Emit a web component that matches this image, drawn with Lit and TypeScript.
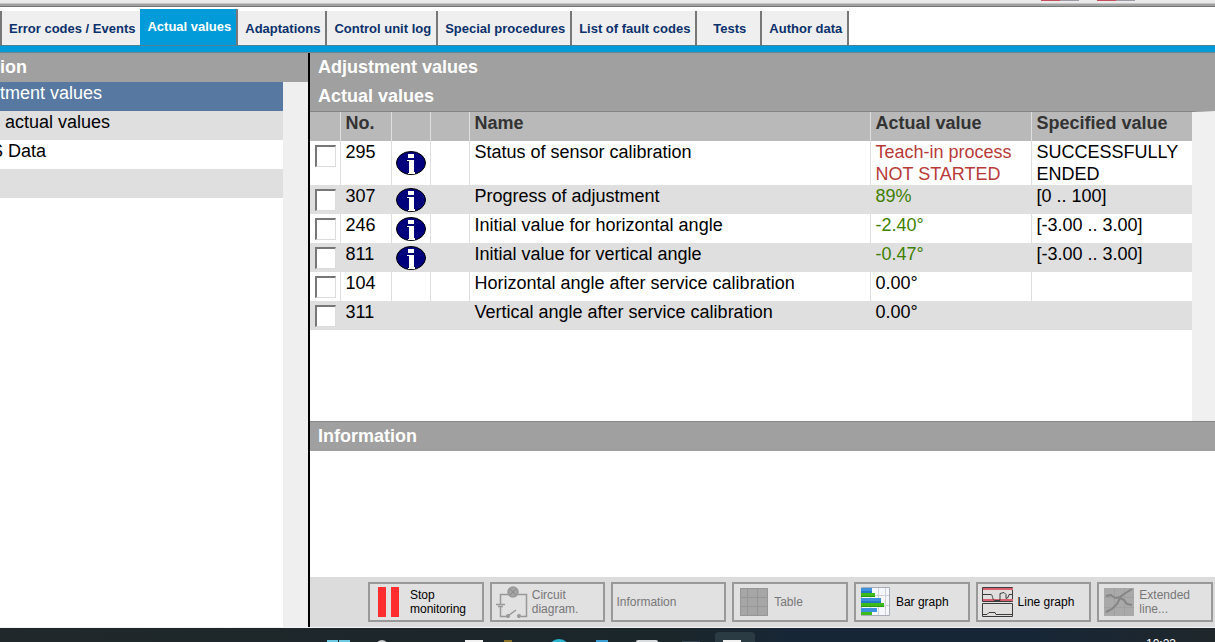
import { LitElement, html, css, svg, nothing } from "lit";
import { customElement, state } from "lit/decorators.js";
import { classMap } from "lit/directives/class-map.js";

interface Row {
  no: string;
  info: boolean;
  name: string;
  actual: string[];
  tone: string;
  spec: string[];
}

const ROWS: Row[] = [
  { no: "295", info: true, name: "Status of sensor calibration", actual: ["Teach-in process", "NOT STARTED"], tone: "bad", spec: ["SUCCESSFULLY", "ENDED"] },
  { no: "307", info: true, name: "Progress of adjustment", actual: ["89%"], tone: "good", spec: ["[0 .. 100]"] },
  { no: "246", info: true, name: "Initial value for horizontal angle", actual: ["-2.40°"], tone: "good", spec: ["[-3.00 .. 3.00]"] },
  { no: "811", info: true, name: "Initial value for vertical angle", actual: ["-0.47°"], tone: "good", spec: ["[-3.00 .. 3.00]"] },
  { no: "104", info: false, name: "Horizontal angle after service calibration", actual: ["0.00°"], tone: "", spec: [] },
  { no: "311", info: false, name: "Vertical angle after service calibration", actual: ["0.00°"], tone: "", spec: [] },
];

const TABS = ["Error codes / Events", "Actual values", "Adaptations", "Control unit log", "Special procedures", "List of fault codes", "Tests", "Author data"];

const pauseIcon = html`<svg width="32" height="32" viewBox="0 0 32 32">
  <path fill="#ff2d30" d="M4 1h8v30H4zM17 1h8v30h-8z" />
</svg>`;

const circuitIcon = html`<svg width="32" height="32" viewBox="0 0 32 32" fill="none" stroke="#999" stroke-width="1.5">
  <path d="M14 8.500H4.500V18M20 8.500H30.500V30.500H25M0 18.500H9M2 20.500H7M4.500 20.500V30.500H11" />
  <path d="M12 30L20 24" />
  <circle cx="17" cy="6" r="5" fill="#a3a3a3" />
  <path stroke-width="1" d="M14 3l6 6M20 3l-6 6" stroke="#8b8b8b" />
  <circle cx="12" cy="30" r="1.300" fill="#999" /><circle cx="23" cy="30" r="1.300" fill="#999" />
</svg>`;

const tableIcon = html`<svg width="32" height="32" viewBox="0 0 32 32">
  <path fill="#a6a6a6" d="M2 2h28v28H2z" />
  <path fill="none" stroke="#969696" d="M2.500 2.500h27v27h-27zM9.500 2v28M19.500 2v28M2 11.500h28M2 20.500h28" />
</svg>`;

const barIcon = html`<svg width="32" height="32" viewBox="0 0 32 32">
  <path fill="#f6f7fb" stroke="#a9adba" d="M1.500 1.500h28v28h-28z" />
  <path fill="none" stroke="#cdd0da" d="M10.500 2v27M18.500 2v27M25.500 2v27M2 9.500h27M2 19.500h27" />
  <path fill="#3b91dd" d="M1 2h11v5H1zM1 12h20v5H1zM1 22h16v4H1z" />
  <path fill="#2377c4" d="M1 5h11v2H1zM1 15h20v2H1z" />
  <path fill="#3dbb1c" d="M1 7h14v4H1zM1 17h23v4H1zM1 26h11v3H1z" />
  <path fill="#269912" d="M1 10h14v1H1zM1 20h23v1H1z" />
</svg>`;

const lineIcon = html`<svg width="32" height="32" viewBox="0 0 32 32" fill="none" stroke="#3c3c3c">
  <path fill="#e1dede" d="M.5 1.500h30v14H.5zM.5 17.500h30v13H.5z" />
  <path stroke="#d8606a" stroke-width="2" d="M1 3h30M1 14h30" />
  <path d="M1 8.500h8c2 0 1 6 4 6h5V7.500l4-1 2 2v4l2-1 1-3h4" />
  <path d="M1 28.500h4l2-2h6l1 2h17" />
</svg>`;

const extendedIcon = html`<svg width="32" height="32" viewBox="0 0 32 32" fill="none">
  <path fill="#a9a9a9" d="M1 2h30v28H1z" />
  <path stroke="#a0a0a0" d="M11.500 2v28M21.500 2v28M1 11.500h30M1 21.500h30" />
  <path stroke="#858585" stroke-width="2" d="M3 10l5-1 4 3 5-1 4-3 8-5M3 26l6-3 5-5 3-6 4 2 3 4 5 1" />
</svg>`;

const TOOLS = [
  { icon: pauseIcon, lines: ["Stop", "monitoring"], off: false },
  { icon: circuitIcon, lines: ["Circuit", "diagram."], off: true },
  { icon: null, lines: ["Information"], off: true },
  { icon: tableIcon, lines: ["Table"], off: true },
  { icon: barIcon, lines: ["Bar graph"], off: false },
  { icon: lineIcon, lines: ["Line graph"], off: false },
  { icon: extendedIcon, lines: ["Extended", "line..."], off: true },
];

const lines = (parts: string[]) => parts.map((p, i) => (i ? html`<br />${p}` : p));

@customElement("app-root")
export class AppRoot extends LitElement {
  @state() private tab = 1;

  static styles = css`
    :host {
      display: flex;
      flex-direction: column;
      height: 100vh;
      overflow: hidden;
      background: #fff;
      color: #000;
      font: 18px/22px "Liberation Sans", Arial, sans-serif;
    }
    * { box-sizing: border-box; }
    button { font: inherit; margin: 0; cursor: pointer; }
    button:disabled { cursor: default; }
    svg { display: block; flex: none; }
    h2 {
      margin: 0;
      padding-left: 8px;
      font-size: 18px;
      line-height: 29px;
      color: #fff;
      background: #a0a0a0;
    }
    .top {
      display: flex;
      justify-content: flex-end;
      gap: 18px;
      flex: none;
      height: 7px;
      padding-right: 80px;
      background: linear-gradient(#e9e9e9 0 3px, #c4c4c4 3px 4px, #a0a0a0 4px 6px, #777 6px);
    }
    .mark { width: 38px; height: 1px; background: linear-gradient(90deg, #c4505c 50%, #a09aa5 50%); }
    .tabs {
      display: flex;
      align-items: flex-end;
      flex: none;
      height: 38px;
      padding-left: 2px;
      background: linear-gradient(#fff 4px, #777 4px) left / 2px no-repeat;
    }
    .tab {
      height: 34px;
      padding: 2px 5px 0 7px;
      border: 0;
      border-right: 2px solid #777;
      background: #efefef;
      color: #0b316b;
      font-size: 13px;
      font-weight: bold;
      white-space: nowrap;
    }
    .short { min-width: 65px; }
    .before { border-right: 0; }
    .current { height: 36px; padding-top: 0; background: #009bd8; color: #fff; }
    .rule {
      flex: none;
      height: 8px;
      background: #009bd8;
      border-top: 1px solid #4d7f96;
      border-bottom: 1px solid #6e8690;
    }
    .body { display: flex; flex: 1; min-height: 0; }
    .side {
      display: flex;
      flex-direction: column;
      flex: 0 0 310px;
      border-right: 2px solid #000;
      overflow: hidden;
    }
    .side h2 { padding: 0; }
    .list { flex: 1; margin: 0; padding: 0; list-style: none; border-right: 25px solid #efefef; }
    .item {
      display: block;
      height: 29px;
      color: #000;
      text-decoration: none;
      white-space: nowrap;
      overflow: hidden;
    }
    .indent { padding-left: 5px; }
    .cut { text-indent: -9px; }
    .alt { background: #dfdfdf; }
    .chosen { background: #5779a1; color: #fff; }
    .main { display: flex; flex-direction: column; flex: 1; min-width: 0; }
    .values { flex: 1; min-height: 0; border-top: 1px solid #858585; border-right: 23px solid #f0f0f0; }
    table { width: 100%; border-collapse: collapse; table-layout: fixed; }
    tr { height: 29px; }
    th, td {
      padding: 0 0 0 5px;
      text-align: left;
      vertical-align: top;
      border-right: 1px solid #dfdfdf;
    }
    th { background: #b9b9b9; color: #333; }
    th:last-child, td:last-child { border-right: 0; }
    .c-check { width: 30px; }
    .c-no { width: 51px; }
    .c-info { width: 39px; }
    .c-actual { width: 161px; }
    .mid { padding: 0 0 0 4px; vertical-align: middle; }
    .bad { color: #b83a38; }
    .good { color: #3f8000; }
    .check {
      appearance: none;
      display: block;
      width: 21px;
      height: 22px;
      margin: 4px 0 0;
      background: #fff;
      border: 1px solid #dcdcdc;
      border-top: 2px solid #777;
      border-left: 2px solid #777;
    }
    .check:checked { background: #00007c; box-shadow: inset 0 0 0 4px #fff; }
    .info { display: block; padding: 0; border: 0; background: none; }
    .title { border-top: 1px solid #858585; }
    .notes { flex: none; height: 126px; }
    .tools {
      display: flex;
      gap: 6px;
      flex: none;
      padding: 5px 2px 5px 58px;
      background: #dcdcdc;
    }
    .tool {
      display: flex;
      align-items: center;
      gap: 4px;
      flex: 1 1 0;
      min-width: 0;
      height: 40px;
      padding: 0 0 0 4px;
      border: 2px solid #999;
      background: #e1e1e1;
      color: #000;
      font-size: 12px;
      line-height: 14px;
      text-align: left;
    }
    .tool:disabled { color: #777; }
    .plain { padding-left: 3px; }
    .taskbar {
      display: flex;
      flex: none;
      height: 15px;
      padding-right: 39px;
      overflow: hidden;
      border-top: 1px solid #f4f4f4;
      background: linear-gradient(90deg, #20282b, #1b262a 55%, #172636 65%, #172636 85%, #1f272b);
      color: #fff;
      font-size: 12px;
    }
    .apps { flex: 1; height: 14px; }
    .clock { padding-top: 5px; }
  `;

  private infoButton(no: string) {
    return html`<button class="info" aria-label="Information on ${no}">
      <svg width="30" height="24" viewBox="0 0 30 24">
        <ellipse cx="15" cy="12" rx="14.500" ry="11.500" fill="#00007c" stroke="#000" />
        <path fill="#fff" d="M12 3h6v4h-6zM11 9h7v12h1v2h-7v-1h1V10h-2z" />
      </svg>
    </button>`;
  }

  render() {
    return html`
      <div class="top"><span class="mark"></span><span class="mark"></span></div>
      <nav class="tabs" role="tablist">
        ${TABS.map(
          (t, i) => html`<button
            role="tab"
            aria-selected=${i === this.tab}
            class=${classMap({ tab: true, current: i === this.tab, before: i === this.tab - 1, short: t === "Tests" })}
            @click=${() => (this.tab = i)}
          >${t}</button>`
        )}
      </nav>
      <div class="rule"></div>
      <div class="body">
        <aside class="side">
          <h2>ion</h2>
          <ul class="list">
            <li><a class="item chosen" href="#adjustment">tment values</a></li>
            <li><a class="item alt indent" href="#actual">actual values</a></li>
            <li><a class="item cut" href="#data">S Data</a></li>
            <li class="item alt"></li>
          </ul>
        </aside>
        <main class="main">
          <h2>Adjustment values</h2>
          <h2>Actual values</h2>
          <div class="values">
            <table>
              <colgroup>
                <col class="c-check" /><col class="c-no" /><col class="c-info" /><col class="c-info" />
                <col /><col class="c-actual" /><col class="c-actual" />
              </colgroup>
              <thead>
                <tr><th></th><th>No.</th><th></th><th></th><th>Name</th><th>Actual value</th><th>Specified value</th></tr>
              </thead>
              <tbody>
                ${ROWS.map(
                  (r, i) => html`<tr class=${i % 2 ? "alt" : ""}>
                    <td><input class="check" type="checkbox" aria-label="Select ${r.no}" /></td>
                    <td>${r.no}</td>
                    <td class="mid">${r.info ? this.infoButton(r.no) : nothing}</td>
                    <td></td>
                    <td>${r.name}</td>
                    <td class=${r.tone}>${lines(r.actual)}</td>
                    <td>${lines(r.spec)}</td>
                  </tr>`
                )}
              </tbody>
            </table>
          </div>
          <h2 class="title">Information</h2>
          <div class="notes"></div>
          <div class="tools">
            ${TOOLS.map(
              (t) => html`<button class="tool ${t.icon ? "" : "plain"}" ?disabled=${t.off}>
                ${t.icon ?? nothing}<span>${lines(t.lines)}</span>
              </button>`
            )}
          </div>
        </main>
      </div>
      <footer class="taskbar">
        <svg class="apps" aria-hidden="true">
          ${svg`
            <rect x="715" y="4" width="40" height="30" rx="4" fill="#2b3b43" />
            <path fill="#6ccbe2" d="M327 12h11v9h-11zM339 12h11v9h-11z" />
            <circle cx="382" cy="18" r="6" fill="#c9cdce" />
            <path fill="#f2f2f2" d="M465 12h18v9h-18zM723 12h18v9h-18z" />
            <path fill="#8a7228" d="M504 12h8v9h-8z" />
            <circle cx="559" cy="22" r="11" fill="#2bb5cf" />
            <path fill="#3b9fd3" d="M596 12h12v9h-12z" />
            <rect x="636" y="12" width="22" height="9" rx="2" fill="#d9dcde" />
            <path fill="#34434f" d="M682 13h18v9h-18z" />
          `}
        </svg>
        <time class="clock">10:23</time>
      </footer>
    `;
  }
}
